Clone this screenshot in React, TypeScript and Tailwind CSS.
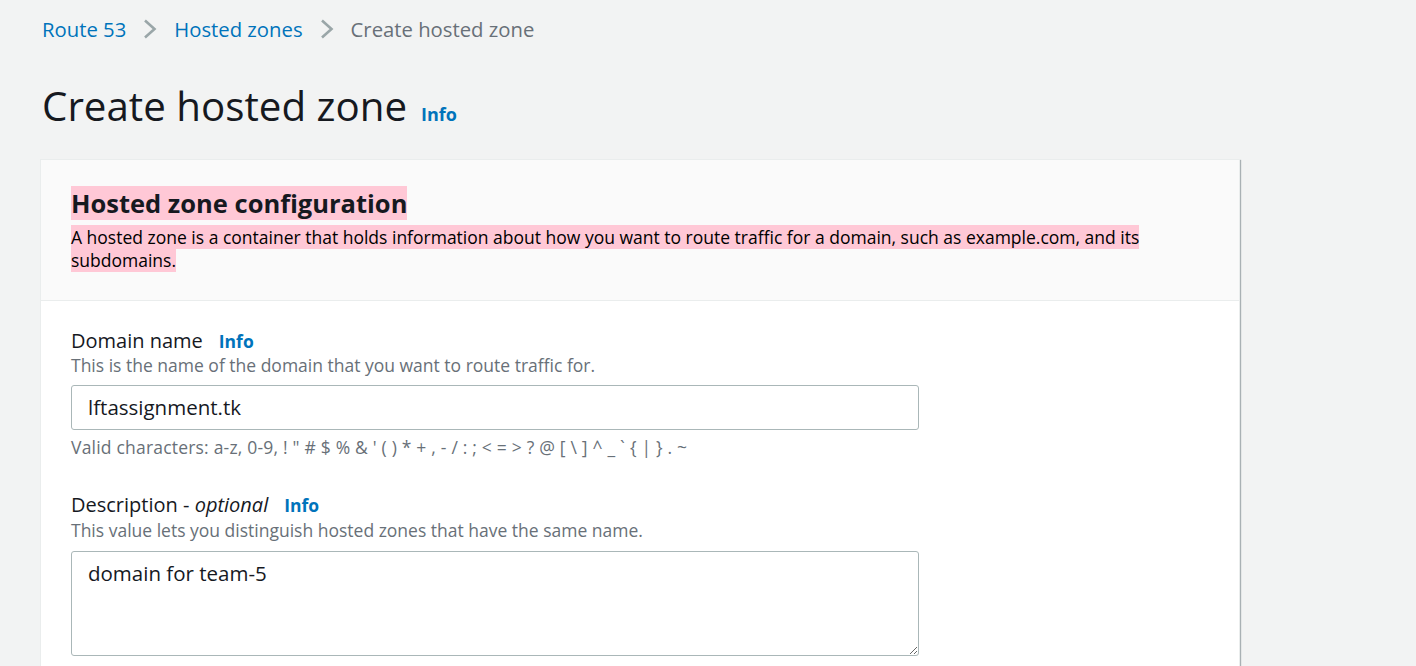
function InfoLink({ className = "" }: { className?: string }) {
  return <span className={`font-bold text-[#0073bb] ${className}`}>Info</span>;
}

function Crumb() {
  return (
    <svg width="14" height="20" viewBox="0 0 14 20" className="mx-[17px] shrink-0">
      <polyline points="2,1.5 11.5,10 2,18.5" fill="none" stroke="#9aa6a8" strokeWidth="2.6" />
    </svg>
  );
}

export default function App() {
  return (
    <div
      className="bg-[#f2f3f3] text-[#16191f] pl-[42px] pt-[14px] overflow-hidden h-[666px]"
      style={{ fontFamily: '"Open Sans", "Noto Sans", Arial, sans-serif' }}
    >
      {/* Breadcrumbs */}
      <nav className="flex items-center h-[30px] text-[20.3px]">
        <span className="text-[#0073bb]">Route 53</span>
        <Crumb />
        <span className="text-[#0073bb]">Hosted zones</span>
        <Crumb />
        <span className="text-[#687078]">Create hosted zone</span>
      </nav>

      {/* Page title */}
      <div className="flex items-baseline gap-[14px] mt-[38px]">
        <h1 className="text-[40.3px] leading-[48px] font-normal">Create hosted zone</h1>
        <InfoLink className="text-[18px]" />
      </div>

      {/* Card */}
      <div className="mt-[29px] w-[1200px] ml-[-2px] bg-white border border-[#eaeded] shadow-[1px_1px_1px_0_rgba(0,28,36,0.3)]">
        <div className="bg-[#fafafa] border-b border-[#eaeded] px-[30px] pt-[26px] pb-[28px]">
          <h2 className="text-[25.5px] leading-[34px] font-bold mb-[6px]">
            <span className="bg-[#ffc8d6]">Hosted zone configuration</span>
          </h2>
          <p className="text-[17.5px] leading-[23px] text-black">
            <span className="bg-[#ffc8d6]">
              A hosted zone is a container that holds information about how you want to route traffic for a domain, such as example.com, and its subdomains.
            </span>
          </p>
        </div>

        <div className="px-[30px] pt-[27px] pb-[40px]">
          {/* Domain name */}
          <div className="flex items-baseline gap-[16px]">
            <label className="text-[20px] leading-[26px]">Domain name</label>
            <InfoLink className="text-[17.5px]" />
          </div>
          <p className="text-[17.5px] leading-[23px] text-[#687078]">
            This is the name of the domain that you want to route traffic for.
          </p>
          <div className="mt-[8px] w-[848px] h-[45px] border border-[#aab7b8] rounded-[3px] flex items-center px-[16px] text-[20.5px]">
            lftassignment.tk
          </div>
          <p className="mt-[6px] text-[17.5px] leading-[23px] text-[#687078] tracking-[0.2px]">
            Valid characters: a-z, 0-9, ! " # $ % &amp; ' ( ) * + , - / : ; &lt; = &gt; ? @ [ \ ] ^ _ ` {"{"} | {"}"} . ~
          </p>

          {/* Description */}
          <div className="flex items-baseline gap-[16px] mt-[33px]">
            <label className="text-[20px] leading-[26px]">
              Description - <i>optional</i>
            </label>
            <InfoLink className="text-[17.5px]" />
          </div>
          <p className="text-[17.5px] leading-[23px] text-[#687078]">
            This value lets you distinguish hosted zones that have the same name.
          </p>
          <textarea
            className="mt-[9px] block w-[848px] h-[105px] border border-[#aab7b8] rounded-[3px] px-[16px] py-[6px] text-[20.5px] text-[#16191f] outline-none resize-y"
            defaultValue="domain for team-5"
          />
          <p className="mt-[6px] text-[17.5px] leading-[23px] text-[#687078]">
            The description can have up to 256 characters. 0/256
          </p>
        </div>
      </div>
    </div>
  );
}
